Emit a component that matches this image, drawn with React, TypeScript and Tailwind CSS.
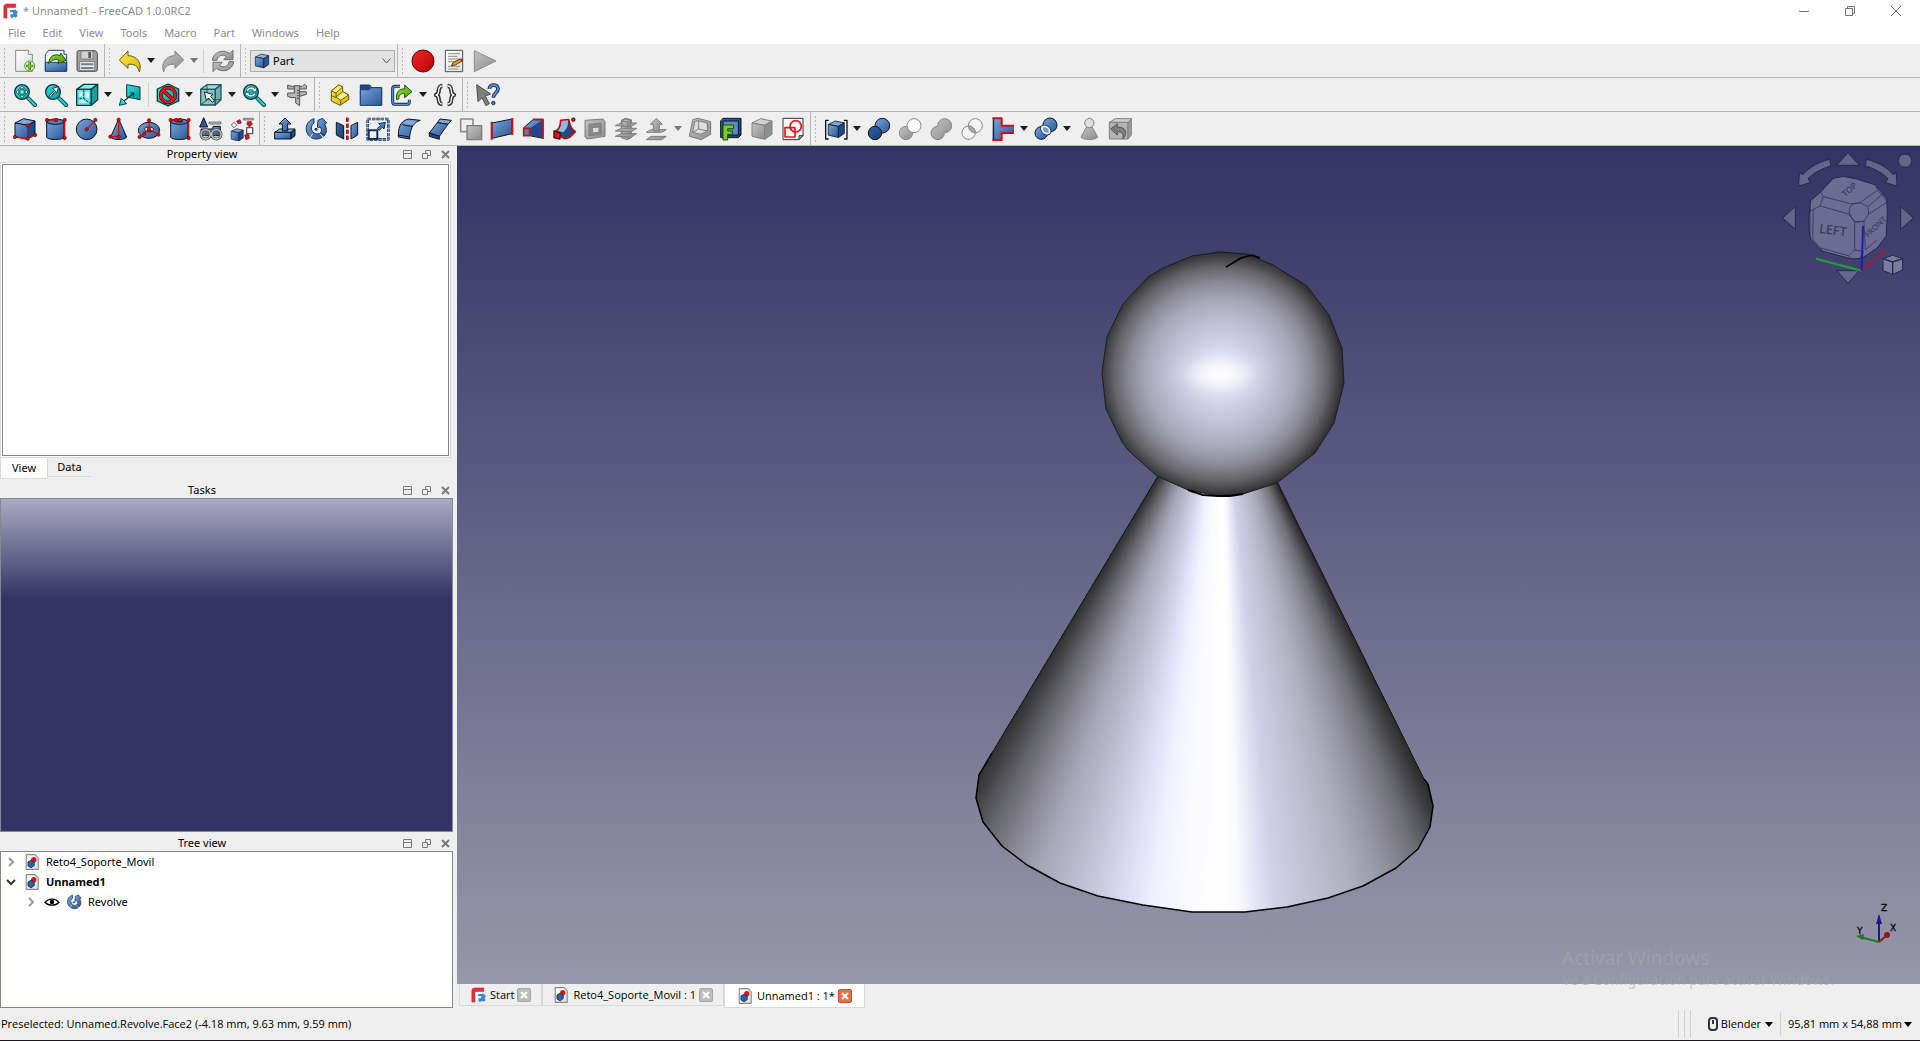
import React from "react";

const INK = "#0b1521";
const SLATE = "#555753";
const TEAL_INK = "#0a3a3c";

type Pic = React.ReactNode;

function Icon({ children, className = "size-6" }: { children: Pic; className?: string }) {
  return (
    <svg viewBox="0 0 72 72" className={`${className} shrink-0`} fill="none" strokeLinejoin="round" aria-hidden="true">
      {children}
    </svg>
  );
}

/* Shared gradients for the icon artwork */
function Gradients() {
  const defs: [string, string, string][] = [
    ["blue", "#7aa6d8", "#2a5596"],
    ["deep", "#3465a4", "#163c74"],
    ["teal", "#34e0e2", "#06989a"],
    ["gray", "#c4c4c4", "#8c8c8c"],
    ["yellow", "#fce94f", "#d9b50a"],
    ["red", "#ef2929", "#b80000"],
    ["green", "#8ae234", "#4e9a06"],
    ["paper", "#ffffff", "#dcdedb"],
  ];
  return (
    <svg className="absolute size-0" aria-hidden="true">
      <defs>
        {defs.map(([id, a, b]) => (
          <linearGradient key={id} id={id} x1="0" y1="0" x2="1" y2="1">
            <stop offset="0" stopColor={a} />
            <stop offset="1" stopColor={b} />
          </linearGradient>
        ))}
      </defs>
    </svg>
  );
}

function Dots({ at }: { at: [number, number][] }) {
  return (
    <>
      {at.map(([x, y]) => (
        <circle key={`${x}-${y}`} cx={x} cy={y} r="5" fill="#e01010" stroke="#6d0000" strokeWidth="2" />
      ))}
    </>
  );
}

function Cube({ top, front, side, ink = INK }: { top: string; front: string; side: string; ink?: string }) {
  return (
    <g stroke={ink} strokeWidth="3">
      <path d="M6 18 32 5 66 12 44 25Z" fill={top} />
      <path d="M6 18 44 25V67L6 58Z" fill={front} />
      <path d="M44 25 66 12V52L44 67Z" fill={side} />
    </g>
  );
}

const lens = (
  <>
    <path d="M46 46 66 66" stroke={TEAL_INK} strokeWidth="12" strokeLinecap="round" />
    <path d="M46 46 66 66" stroke="#22cdd0" strokeWidth="7" strokeLinecap="round" />
    <circle cx="27" cy="27" r="22" fill="url(#teal)" stroke={TEAL_INK} strokeWidth="4" />
  </>
);

const pic: Record<string, Pic> = {
  new: (
    <>
      <path d="M8 4H46L58 16V67H8Z" fill="url(#paper)" stroke="#888a85" strokeWidth="3" />
      <path d="M46 4V16H58" fill="#fff" stroke="#888a85" strokeWidth="3" />
      <circle cx="50" cy="51" r="15" fill="#eef8e4" stroke="#5c8f2e" strokeWidth="3" />
      <path d="M50 40V62M39 51H61" stroke="#39700a" strokeWidth="8" />
      <path d="M50 42V60M41 51H59" stroke="#73d216" strokeWidth="4" />
    </>
  ),
  open: (
    <>
      <path d="M4 16V66H68V16H60V4H14L6 14Z" fill="#eef0f2" stroke="#23497f" strokeWidth="3" />
      <path d="M4 40H68V67H4Z" fill="url(#blue)" stroke="#1d3f73" strokeWidth="3" />
      <path d="M14 44C16 18 34 14 48 20L50 12 66 34 42 44 45 34C34 28 26 32 14 44Z" fill="url(#green)" stroke="#244f04" strokeWidth="3" />
    </>
  ),
  save: (
    <>
      <path d="M6 10Q6 5 11 5H61L67 12V62Q67 67 62 67H11Q6 67 6 62Z" fill="#a0a19d" stroke="#4d4f4b" strokeWidth="3" />
      <path d="M18 6H54V30H18Z" fill="#d3d4d1" stroke="#666" strokeWidth="2" />
      <path d="M40 9H48V27H40Z" fill="#55575a" />
      <path d="M14 38H59V64H14Z" fill="#eee" stroke="#666" strokeWidth="2" />
      <path d="M18 43H55V49H18ZM18 54H55V60H18Z" fill="#6f7f97" />
    </>
  ),
  undo: <path d="M4 33 30 6V20C56 20 74 42 64 69C60 50 48 44 30 46V58Z" fill="url(#yellow)" stroke="#6b5a04" strokeWidth="3" />,
  redo: <path d="M68 33 42 6V20C16 20-2 42 8 69C12 50 24 44 42 46V58Z" fill="url(#gray)" stroke="#848484" strokeWidth="3" />,
  refresh: (
    <g fill="url(#gray)" stroke="#6e6e6e" strokeWidth="3">
      <path d="M4 34C6 10 36-2 56 14L66 4V32H38L47 23C34 14 20 20 18 34Z" />
      <path d="M68 38C66 62 36 74 16 58L6 68V40H34L25 49C38 58 52 52 54 38Z" />
    </g>
  ),
  part: <Cube top="#8db6e2" front="url(#blue)" side="#2a5591" />,
  record: <circle cx="36" cy="36" r="33" fill="url(#red)" stroke="#640000" strokeWidth="3" />,
  macro: (
    <>
      <path d="M10 4H62V68H10Z" fill="url(#paper)" stroke="#4e504c" strokeWidth="3" />
      <path d="M18 14H54M18 22H46M18 30H54M18 38H38M18 52H54M18 60H48" stroke="#8c8e89" strokeWidth="3" />
      <path d="M28 50 34 40 56 30 60 36 40 48Z" fill="#e0a020" stroke="#5c3a00" strokeWidth="3" />
      <path d="M54 31 58 28 63 34 60 37Z" fill="#d01010" />
    </>
  ),
  play: <path d="M4 5 69 36 4 68Z" fill="url(#gray)" stroke="#8d8d8d" strokeWidth="3" />,
  fitAll: (
    <>
      {lens}
      <path d="M27 9 34 17H20ZM27 45 34 37H20ZM9 27 17 20V34ZM45 27 37 20V34Z" fill="#fff" stroke={TEAL_INK} strokeWidth="2" />
      <path d="M21 21H33V33H21Z" fill="#8ff0f0" stroke={TEAL_INK} strokeWidth="2" />
    </>
  ),
  fitSel: (
    <>
      {lens}
      <path d="M14 40 32 22 26 16 44 11 39 29 34 25 19 43Z" fill="#fff" stroke={TEAL_INK} strokeWidth="3" />
    </>
  ),
  iso: (
    <>
      <g stroke={TEAL_INK} strokeWidth="4">
        <path d="M5 19 26 4H68L49 19Z" fill="#7df2f2" />
        <path d="M5 19H49V67H5Z" fill="#5fe6e8" />
        <path d="M49 19 68 4V50L49 67Z" fill="#0ea5a8" />
      </g>
      <path d="M26 22V46H9M26 46 46 62" stroke={TEAL_INK} strokeWidth="3" strokeDasharray="6 4" />
      <path d="M13 27H22V41H13ZM31 27H42V47L31 43ZM14 60V52H26L36 60Z" fill="#d9fbfb" />
    </>
  ),
  axes: (
    <>
      <path d="M26 5 66 12V50L26 42Z" fill="url(#teal)" stroke={TEAL_INK} strokeWidth="3" />
      <path d="M48 30 18 54" stroke={TEAL_INK} strokeWidth="4" />
      <path d="M36 30 48 30 46 42" stroke={TEAL_INK} strokeWidth="3" />
      <path d="M4 67 10 46 26 62Z" fill="#2fd6d8" stroke={TEAL_INK} strokeWidth="3" />
    </>
  ),
  drawStyle: (
    <>
      <path d="M36 3 68 18V54L36 69 4 54V18Z" fill="url(#teal)" stroke={TEAL_INK} strokeWidth="4" />
      <circle cx="36" cy="36" r="22" stroke="#4a0000" strokeWidth="11" />
      <path d="M21 22 51 50" stroke="#4a0000" strokeWidth="11" />
      <circle cx="36" cy="36" r="22" stroke="#e01818" strokeWidth="7" />
      <path d="M21 22 51 50" stroke="#e01818" strokeWidth="7" />
    </>
  ),
  selView: (
    <>
      <g stroke="#1d5a5c" strokeWidth="4">
        <path d="M5 19 24 5H66L49 19Z" fill="#a8d8d8" />
        <path d="M5 19H49V66H5Z" fill="#8cc2c2" />
        <path d="M49 19 66 5V50L49 66Z" fill="#6fb0b1" />
        <path d="M24 6V50L6 65M24 50H66" strokeWidth="3" />
      </g>
      <path d="M16 27 42 34 34 40 46 53 40 58 29 45 22 52Z" fill="#fff" stroke="#123" strokeWidth="3" />
    </>
  ),
  syncView: (
    <>
      {lens}
      <path d="M12 25C14 12 32 8 39 17L43 13V26H30L34 22C28 17 20 19 18 25ZM42 30C40 42 22 46 15 37L11 41V29H24L20 33C26 38 34 36 36 30Z" fill="#fff" stroke={TEAL_INK} strokeWidth="2" />
    </>
  ),
  caliper: (
    <g fill="#b5b6b2" stroke={SLATE} strokeWidth="3">
      <path d="M8 6 20 10H52L58 4 64 8V18H8Z" />
      <path d="M28 8H44V68L32 60V44H18L8 40V30H28Z" />
      <path d="M44 26H64V34L44 40Z" />
      <path d="M36 22H42M36 30H42M36 38H42M36 46H42" />
    </g>
  ),
  blocks: (
    <g stroke="#6b5a04" strokeWidth="3">
      <path d="M10 24 32 6 44 12V26L62 36V50L36 67 10 54Z" fill="url(#yellow)" />
      <path d="M10 24 32 6 44 12 24 30ZM24 42 44 26 62 36 38 52Z" fill="#fff27a" />
      <path d="M24 30V42M38 52V66M10 38 24 44" />
    </g>
  ),
  folder: (
    <>
      <path d="M4 6H32L38 14H68V66H4Z" fill="#234a85" stroke="#15305c" strokeWidth="3" />
      <path d="M4 20H30L36 14H68V67H4Z" fill="url(#blue)" stroke="#1d3f73" strokeWidth="3" />
    </>
  ),
  share: (
    <>
      <path d="M30 10H16Q8 10 8 18V56Q8 64 16 64H50Q58 64 58 56V50" stroke="#10294d" strokeWidth="9" />
      <path d="M30 10H16Q8 10 8 18V56Q8 64 16 64H50Q58 64 58 56V50" stroke="#5b8cc8" strokeWidth="4" />
      <path d="M20 50C16 26 30 16 44 18V6L66 26 44 44V32C34 30 26 36 26 48Z" fill="url(#green)" stroke="#244f04" strokeWidth="3" />
    </>
  ),
  braces: (
    <>
      <path d="M28 9C10 9 24 34 9 36C24 38 10 63 28 63M44 9C62 9 48 34 63 36C48 38 62 63 44 63" stroke="#2e3436" strokeWidth="13" />
      <path d="M27 9C10 9 24 34 9 36C24 38 10 63 27 63M45 9C62 9 48 34 63 36C48 38 62 63 45 63" stroke="#fafafa" strokeWidth="4" />
    </>
  ),
  whats: (
    <>
      <path d="M2 5 44 33 28 39 40 62 30 68 18 44 6 56Z" fill="#7e807c" stroke="#4a4c49" strokeWidth="3" />
      <path d="M40 18C40 2 66 2 66 18C66 30 52 28 52 44" stroke="#10294d" strokeWidth="11" />
      <path d="M40 18C40 2 66 2 66 18C66 30 52 28 52 44" stroke="#5b8cc8" strokeWidth="6" />
      <circle cx="52" cy="60" r="5" fill="#5b8cc8" stroke="#10294d" strokeWidth="3" />
    </>
  ),
  box: (
    <>
      <Cube top="#7ba9da" front="url(#blue)" side="#204a87" />
      <path d="M6 60 44 66 66 53M44 66V26" stroke="#d01010" strokeWidth="4" />
      <Dots at={[[6, 60], [44, 65], [66, 54], [44, 25]]} />
    </>
  ),
  cylinder: (
    <>
      <path d="M8 14V60C8 70 60 70 60 60V14Z" fill="url(#blue)" stroke={INK} strokeWidth="3" />
      <ellipse cx="34" cy="14" rx="26" ry="8" fill="#4c7fbe" stroke={INK} strokeWidth="3" />
      <path d="M9 9H34M62 9V62" stroke="#d01010" strokeWidth="4" />
      <Dots at={[[9, 9], [36, 9], [62, 9], [62, 63]]} />
    </>
  ),
  sphere: (
    <>
      <circle cx="35" cy="37" r="31" fill="url(#blue)" stroke={INK} strokeWidth="3" />
      <path d="M35 37 60 10" stroke="#d01010" strokeWidth="4" />
      <Dots at={[[35, 37], [61, 9]]} />
    </>
  ),
  cone: (
    <>
      <path d="M38 6 62 60C58 70 18 70 14 60Z" fill="url(#blue)" stroke={INK} strokeWidth="3" />
      <path d="M38 8V59H14" stroke="#d01010" strokeWidth="4" />
      <Dots at={[[38, 8], [38, 59], [13, 59]]} />
    </>
  ),
  torus: (
    <>
      <ellipse cx="36" cy="40" rx="32" ry="24" fill="url(#blue)" stroke={INK} strokeWidth="3" />
      <ellipse cx="36" cy="37" rx="13" ry="7" fill="#e8eef6" stroke={INK} strokeWidth="3" />
      <path d="M36 10V37L8 60M36 37 64 53" stroke="#d01010" strokeWidth="4" />
      <Dots at={[[36, 10], [36, 37], [8, 60], [22, 50], [64, 53]]} />
    </>
  ),
  tube: (
    <>
      <path d="M8 14V60C8 70 60 70 60 60V14Z" fill="url(#blue)" stroke={INK} strokeWidth="3" />
      <ellipse cx="34" cy="14" rx="26" ry="8" fill="#4c7fbe" stroke={INK} strokeWidth="3" />
      <ellipse cx="34" cy="13" rx="12" ry="4" fill="#122c54" />
      <path d="M8 9H40M62 9V62" stroke="#d01010" strokeWidth="4" />
      <Dots at={[[8, 9], [24, 9], [36, 9], [62, 9], [62, 63]]} />
    </>
  ),
  primitives: (
    <>
      <path d="M14 2 26 30H2Z" fill="#2c5a9a" stroke={INK} strokeWidth="3" />
      <path d="M30 15H66V21H30Z" fill="#b5b6b2" stroke={SLATE} strokeWidth="2" />
      <path d="M6 36H38L44 28H64V56H6Z" fill="url(#blue)" stroke={INK} strokeWidth="3" />
      <g stroke={SLATE} strokeWidth="9">
        <circle cx="20" cy="52" r="14" />
        <circle cx="52" cy="52" r="14" />
      </g>
      <g stroke="#c9cac6" strokeWidth="4">
        <circle cx="20" cy="52" r="14" />
        <circle cx="52" cy="52" r="14" />
      </g>
      <path d="M16 56 24 46M48 56 56 46" stroke={SLATE} strokeWidth="4" />
    </>
  ),
  builder: (
    <>
      <g transform="translate(0 32) scale(.6)">
        <Cube top="#7ba9da" front="url(#blue)" side="#204a87" />
      </g>
      <path d="M12 16 20 24 12 32 4 24Z" fill="#fff" stroke={SLATE} strokeWidth="3" />
      <path d="M40 4H70V9H40Z" fill="#b5b6b2" stroke={SLATE} strokeWidth="2" />
      <path d="M50 32H68V50H50Z" fill="#fff" stroke={SLATE} strokeWidth="4" />
      <path d="M20 12 30 8 34 18 24 20ZM52 14H64V20H68L58 30 50 20H54ZM44 54 56 52 58 64 48 68Z" fill="#e01818" stroke="#6d0000" strokeWidth="2" />
    </>
  ),
  extrude: (
    <>
      <path d="M5 46 20 36H66L54 46Z" fill="#8db6e2" stroke={INK} strokeWidth="3" />
      <path d="M5 46H54V66H5Z" fill="url(#blue)" stroke={INK} strokeWidth="3" />
      <path d="M54 46 66 36V56L54 66Z" fill="#204a87" stroke={INK} strokeWidth="3" />
      <path d="M36 3 54 21H44V42H28V21H18Z" fill="url(#blue)" stroke={INK} strokeWidth="3" />
    </>
  ),
  revolve: (
    <>
      <path d="M30 5A31 31 0 1 0 62 54L50 48A18 18 0 1 1 30 18Z" fill="url(#blue)" stroke="#17345f" strokeWidth="3" />
      <path d="M18 62 26 50M58 62 48 50" stroke="#efefef" strokeWidth="3" />
      <path d="M42 10 56 4 68 18 62 22C70 36 68 48 62 54L50 48C54 40 52 34 48 30L40 34Z" fill="url(#blue)" stroke="#17345f" strokeWidth="3" />
      <circle cx="36" cy="37" r="6" fill="#17345f" stroke="#efefef" strokeWidth="3" />
    </>
  ),
  mirror: (
    <>
      <path d="M4 16 26 26V66L4 54Z" fill="url(#deep)" stroke={INK} strokeWidth="3" />
      <path d="M68 16 48 26V66L68 54Z" fill="url(#blue)" stroke={INK} strokeWidth="3" />
      <path d="M37 2V70" stroke="#6d0000" strokeWidth="8" strokeDasharray="12 6" />
      <path d="M37 2V70" stroke="#e01818" strokeWidth="5" strokeDasharray="12 6" />
    </>
  ),
  scale: (
    <>
      <path d="M5 6H67V67H5Z" stroke="#12305c" strokeWidth="8" strokeDasharray="10 3" />
      <path d="M5 6H67V67H5Z" stroke="#5b8cc8" strokeWidth="4" strokeDasharray="10 3" />
      <path d="M8 40H34V66H8Z" fill="#f2f2f2" stroke="#12305c" strokeWidth="6" />
      <path d="M34 34 44 26 38 20 58 16 54 36 49 31 40 40Z" fill="url(#blue)" stroke="#12305c" strokeWidth="3" />
    </>
  ),
  fillet: (
    <>
      <path d="M4 54C4 24 16 10 34 6L70 10C50 16 42 30 38 58V66L4 60Z" fill="url(#blue)" stroke={INK} strokeWidth="3" />
      <path d="M4 54 38 60M16 22C24 26 38 28 48 28" stroke={INK} strokeWidth="3" />
      <path d="M34 9 62 12C56 14 52 18 48 24 38 24 28 22 20 19 24 14 28 11 34 9Z" fill="#7fabdc" />
    </>
  ),
  chamfer: (
    <g stroke={INK} strokeWidth="3">
      <path d="M36 6 70 10 60 22 28 17Z" fill="#7fabdc" />
      <path d="M28 17 60 22 34 58 4 48Z" fill="url(#blue)" />
      <path d="M4 48 34 58V67L4 58Z" fill="#204a87" />
    </g>
  ),
  face: (
    <>
      <path d="M5 6H42V44H5Z" fill="#efefef" stroke="#8d8d8d" strokeWidth="5" />
      <path d="M24 26H68V68H24Z" fill="url(#gray)" stroke="#7c7c7c" strokeWidth="4" />
    </>
  ),
  ruled: (
    <>
      <path d="M6 18 66 6V50L6 64Z" fill="url(#blue)" stroke={INK} strokeWidth="3" />
      <path d="M5 14V68M67 3V54" stroke="#d01010" strokeWidth="6" />
    </>
  ),
  loft: (
    <>
      <path d="M8 32 36 8H66V64L26 56 8 54Z" fill="url(#blue)" stroke={INK} strokeWidth="3" />
      <path d="M26 34 64 10V62L26 54Z" fill="#204a87" />
      <path d="M36 7H66V66" stroke="#d01010" strokeWidth="5" />
      <path d="M8 34H26V56H8Z" fill="#4c7fbe" stroke="#d01010" strokeWidth="5" />
    </>
  ),
  sweep: (
    <>
      <path d="M26 10 50 8C54 30 60 38 70 44L54 60C44 66 30 66 24 56L8 44C20 40 26 28 26 10Z" fill="#204a87" stroke="#c00" strokeWidth="5" />
      <path d="M28 12 48 10C50 24 44 36 34 46L16 42C24 36 28 26 28 12Z" fill="#8db6e2" />
      <path d="M6 42 24 48V66L6 62Z" fill="#e01818" stroke="#4a0000" strokeWidth="4" />
      <circle cx="64" cy="8" r="5" fill="#e01818" stroke="#4a0000" strokeWidth="3" />
    </>
  ),
  section: (
    <g stroke="#7c7c7c" strokeWidth="3">
      <path d="M6 10 60 6 66 14V58L12 66 6 60Z" fill="url(#gray)" />
      <path d="M18 22 54 19V52L18 56Z" fill="#8c8c8c" />
      <path d="M28 32 48 30V46L28 48Z" fill="#dcdcdc" />
    </g>
  ),
  crossSections: (
    <g fill="url(#gray)" stroke="#7c7c7c" strokeWidth="3">
      <path d="M22 10 34 4 52 8V62L40 68 22 62Z" />
      <path d="M4 26 22 18H68L52 28ZM4 42 22 34H68L52 44ZM4 58 22 50H68L52 60Z" />
      <path d="M24 12 34 6 50 9V24L42 30 24 26Z" />
      <path d="M24 12 42 15 50 9M42 15V28" />
    </g>
  ),
  offset: (
    <g fill="url(#gray)" stroke="#7c7c7c" strokeWidth="3">
      <path d="M4 46 18 38H64L50 46ZM4 68 18 58H64L50 68Z" />
      <path d="M34 4 52 22H43V42H25V22H16Z" />
    </g>
  ),
  thickness: (
    <g stroke="#7c7c7c" strokeWidth="3">
      <path d="M14 8 30 4 68 14V52L40 68 4 58Z" fill="url(#gray)" />
      <path d="M20 14 30 11 58 18V42L38 52 14 46Z" fill="#dedede" />
      <path d="M32 12V36L58 42M32 36 14 46" />
    </g>
  ),
  projection: (
    <>
      <path d="M5 12 12 4H66V54L58 62H5Z" fill="url(#deep)" stroke={INK} strokeWidth="3" />
      <path d="M12 12H58V54H12Z" fill="#5b8cc8" stroke={INK} strokeWidth="3" />
      <path d="M12 24H44V35H26V42H40V52H26V69H12Z" fill="#73d216" stroke="#1f4a04" strokeWidth="3" />
    </>
  ),
  grayCube: <Cube top="#d2d2d2" front="url(#gray)" side="#909090" ink="#808080" />,
  sketch: (
    <>
      <path d="M6 4H66V56L54 68H6Z" fill="#fdfdfd" stroke="#2e3436" strokeWidth="3" />
      <path d="M66 56H54V68Z" fill="#b8b9b5" stroke="#2e3436" strokeWidth="3" />
      <circle cx="44" cy="28" r="17" stroke="#e01818" strokeWidth="5" />
      <path d="M12 32H42V60H12Z" stroke="#e01818" strokeWidth="5" />
    </>
  ),
  compound: (
    <>
      <path d="M14 10H5V66H14M60 10H69V66H60" stroke={INK} strokeWidth="4" />
      <g transform="translate(8 8) scale(.8)">
        <Cube top="#7ba9da" front="url(#blue)" side="#204a87" />
      </g>
    </>
  ),
  boolean: (
    <g stroke={INK} strokeWidth="3">
      <circle cx="46" cy="26" r="22" fill="url(#blue)" />
      <circle cx="24" cy="48" r="20" fill="url(#deep)" />
    </g>
  ),
  cut: (
    <g stroke="#8a8a8a" strokeWidth="3">
      <circle cx="24" cy="48" r="20" fill="url(#gray)" />
      <circle cx="48" cy="26" r="21" fill="#fdfdfd" />
    </g>
  ),
  fuse: <path d="M26 28A21 21 0 1 1 46 47A20 20 0 1 1 26 28Z" fill="url(#gray)" stroke="#858585" strokeWidth="3" />,
  common: (
    <g stroke="#8a8a8a" strokeWidth="3">
      <circle cx="46" cy="26" r="21" fill="#f8f8f8" />
      <circle cx="26" cy="47" r="20" fill="#f8f8f8" fillOpacity=".7" />
      <path d="M26 27C36 26 46 36 46 47C34 48 25 38 26 27Z" fill="#a6a6a6" />
    </g>
  ),
  join: (
    <>
      <path d="M4 4H32V26H69V48H32V69H4Z" fill="url(#blue)" />
      <path d="M4 4H32V26H69M69 48H32V69H4" stroke="#d01010" strokeWidth="6" />
      <path d="M8 7V66" stroke={INK} strokeWidth="3" />
    </>
  ),
  split: (
    <g stroke={INK} strokeWidth="3">
      <circle cx="48" cy="24" r="21" fill="url(#blue)" />
      <circle cx="22" cy="48" r="19" fill="url(#blue)" />
      <path d="M24 30C38 24 50 36 46 48C34 54 22 44 24 30Z" fill="#6c9bd2" stroke="#12305c" strokeWidth="10" />
      <path d="M24 30C38 24 50 36 46 48C34 54 22 44 24 30Z" fill="#6c9bd2" stroke="#f4f4f4" strokeWidth="5" />
    </g>
  ),
  check: (
    <g stroke="#848484" strokeWidth="3">
      <path d="M30 28 12 60C16 70 58 70 62 60L44 28Z" fill="url(#gray)" />
      <circle cx="37" cy="18" r="14" fill="#dedede" />
    </g>
  ),
  defeature: (
    <>
      <path d="M4 16 22 5H70L60 16Z" fill="#cfcfcf" stroke="#808080" strokeWidth="3" />
      <path d="M4 16H60V66H4Z" fill="#b4b4b4" stroke="#808080" strokeWidth="3" />
      <path d="M60 16 70 5V54L60 66Z" fill="#9a9a9a" stroke="#808080" strokeWidth="3" />
      <path d="M8 36 28 20V30C56 30 60 50 44 66C48 50 42 44 28 44V54Z" fill="#7c7c7c" stroke="#585858" strokeWidth="3" />
    </>
  ),
  eye: (
    <>
      <path d="M5 38C20 18 52 18 67 38C52 54 20 54 5 38Z" fill="#fff" stroke="#000" strokeWidth="6" />
      <circle cx="36" cy="36" r="10" fill="#000" />
    </>
  ),
  doc: (
    <>
      <path d="M10 3H50L64 17V69H10Z" fill="url(#paper)" stroke="#888a85" strokeWidth="5" />
      <circle cx="44" cy="26" r="12" fill="#d81818" />
      <path d="M18 36 32 28 46 36V52L32 62 18 54Z" fill="#2f62a5" stroke="#142d54" strokeWidth="4" />
    </>
  ),
  logo: (
    <>
      <path d="M8 68V18Q8 4 22 4H62V20H24V68Z" fill="#e0303c" stroke="#b01824" strokeWidth="2" />
      <path d="M36 28H58L64 34 70 36V44L66 50 70 58 62 66 54 62 44 70 38 62Z" fill="#3d86dc" />
      <path d="M24 22H56V32H35V42H50V51H35V69H24Z" fill="#fff" />
    </>
  ),
};

type Tool = { label: string; icon?: string; menu?: boolean; off?: boolean };
const t = (icon: string, label: string, menu = false, off = false): Tool => ({ icon, label, menu, off });
const gap: Tool = { label: "|" };

const fileTools = [t("new", "New"), t("open", "Open"), t("save", "Save")];
const editTools = [t("undo", "Undo", true), t("redo", "Redo", true, true), gap, t("refresh", "Refresh")];
const macroTools = [t("record", "Record macro"), t("macro", "Macros"), t("play", "Execute macro")];
const viewTools = [
  t("fitAll", "Fit all"), t("fitSel", "Fit selection"), t("iso", "Isometric", true), t("axes", "Align to selection"), gap,
  t("drawStyle", "Draw style", true), t("selView", "Selection view", true), t("syncView", "Sync view", true), t("caliper", "Measure"),
];
const structureTools = [t("blocks", "Create part"), t("folder", "Create group"), t("share", "Link", true), t("braces", "Variable set")];
const helpTools = [t("whats", "What's this?")];
const solidTools = [
  t("box", "Cube"), t("cylinder", "Cylinder"), t("sphere", "Sphere"), t("cone", "Cone"), t("torus", "Torus"),
  t("tube", "Tube"), t("primitives", "Primitives"), t("builder", "Shape builder"),
];
const partTools = [
  t("extrude", "Extrude"), t("revolve", "Revolve"), t("mirror", "Mirror"), t("scale", "Scale"), t("fillet", "Fillet"),
  t("chamfer", "Chamfer"), t("face", "Make face"), t("ruled", "Ruled surface"), t("loft", "Loft"), t("sweep", "Sweep"),
  t("section", "Section"), t("crossSections", "Cross-sections"), t("offset", "Offset", true, true), t("thickness", "Thickness"),
  t("projection", "Projection on surface"), t("grayCube", "Color per face"), t("sketch", "Sketch"),
];
const booleanTools = [
  t("compound", "Compound", true), t("boolean", "Boolean"), t("cut", "Cut"), t("fuse", "Union"), t("common", "Intersection"),
  t("join", "Join", true), t("split", "Split", true), t("check", "Check geometry"), t("defeature", "Defeaturing"),
];

function Caret({ className = "text-black" }: { className?: string }) {
  return (
    <svg viewBox="0 0 8 5" className={`h-[5px] w-2 shrink-0 ${className}`} aria-hidden="true">
      <path d="M0 0H8L4 5Z" fill="currentColor" />
    </svg>
  );
}

function Handle() {
  return (
    <div className="flex w-[9px] items-center justify-center" aria-hidden="true">
      <div className="h-[27px] w-[3px] bg-[radial-gradient(circle,#b4b4b4_1px,transparent_1px)] bg-[size:3px_4px]" />
    </div>
  );
}

function Bar({ children, last = false }: { children: Pic; last?: boolean }) {
  return (
    <div className={`flex items-stretch ${last ? "flex-1" : "border-r border-[#b4b4b4]"}`} role="toolbar">
      <Handle />
      <div className="flex items-center pr-[2px]">{children}</div>
    </div>
  );
}

function Tools({ items }: { items: Tool[] }) {
  return (
    <>
      {items.map((it) =>
        it.icon ? (
          <div key={it.label} className="flex items-center">
            <button aria-label={it.label} className="flex h-8 w-[31px] items-center justify-center">
              <Icon>{pic[it.icon]}</Icon>
            </button>
            {it.menu && (
              <button aria-label={`${it.label} options`} className="flex h-8 w-3 items-center justify-center">
                <Caret className={it.off ? "text-[#777]" : "text-[#1c1c1c]"} />
              </button>
            )}
          </div>
        ) : (
          <div key={it.label} className="mx-[3px] h-6 w-px bg-[#cfcfcf]" />
        ),
      )}
    </>
  );
}

function Row({ children }: { children: Pic }) {
  return <div className="flex h-[34px] items-stretch border-b border-[#b4b4b4]">{children}</div>;
}

function DockTitle({ title }: { title: string }) {
  return (
    <div className="flex h-4 shrink-0 items-center pl-[5px]">
      <h2 className="flex-1 text-center">{title}</h2>
      <div className="flex items-center gap-[3px] text-[#7a7a7a]">
        <button aria-label={`Collapse ${title}`} className="flex size-4 items-center justify-center">
          <svg viewBox="0 0 9 9" className="size-[9px]" fill="none" stroke="currentColor"><path d="M.5.5H8.5V8.5H.5ZM1 3.500H8" /></svg>
        </button>
        <button aria-label={`Float ${title}`} className="flex size-4 items-center justify-center">
          <svg viewBox="0 0 9 9" className="size-[9px]" fill="none" stroke="currentColor"><path d="M.5 3.500H5.500V8.500H.5ZM3.500 3V.5H8.500V5.500H6" /></svg>
        </button>
        <button aria-label={`Close ${title}`} className="flex size-4 items-center justify-center">
          <svg viewBox="0 0 9 9" className="size-[9px]" fill="none" stroke="currentColor" strokeWidth="2"><path d="M1 1 8 8M8 1 1 8" /></svg>
        </button>
      </div>
    </div>
  );
}

function Twisty({ open = false }: { open?: boolean }) {
  return (
    <button aria-label={open ? "Collapse" : "Expand"} className={`flex size-5 shrink-0 items-center justify-center ${open ? "text-[#333]" : "text-[#9a9a9a]"}`}>
      <svg viewBox="0 0 10 10" className="size-[10px]" fill="none" stroke="currentColor" strokeWidth="2">
        <path d={open ? "M1 3 5 7 9 3" : "M3 1 7 5 3 9"} />
      </svg>
    </button>
  );
}

/* Shade of the cone surface against horizontal slope (dx/dy) measured from its apex */
const shade: [number, number, number, number][] = [
  [-0.62, 42, 42, 44], [-0.57, 66, 66, 70], [-0.5, 104, 104, 111], [-0.42, 144, 142, 155], [-0.36, 168, 168, 186],
  [-0.3, 184, 184, 205], [-0.22, 208, 208, 230], [-0.18, 222, 222, 246], [-0.12, 243, 243, 255], [-0.06, 250, 250, 255],
  [0.0, 255, 255, 255], [0.03, 250, 250, 254], [0.07, 226, 226, 243], [0.1, 208, 208, 232], [0.17, 194, 194, 214],
  [0.25, 174, 174, 190], [0.32, 150, 149, 163], [0.4, 112, 112, 120], [0.46, 68, 68, 72], [0.51, 34, 34, 36],
];
const APEX = { x: 262, y: 142 };

/* Each wedge reaches to the right edge and is overlaid by the next, so no seams show */
function coneFan() {
  const parts: Pic[] = [];
  const step = 0.005;
  const far = 560;
  for (let u = -0.68; u < 0.62; u += step) {
    const m = u + step / 2;
    let i = 0;
    while (i < shade.length - 2 && shade[i + 1][0] < m) i++;
    const a = shade[i];
    const b = shade[i + 1];
    const k = Math.min(1, Math.max(0, (m - a[0]) / (b[0] - a[0])));
    const c = [1, 2, 3].map((n) => Math.round(a[n] + (b[n] - a[n]) * k));
    parts.push(
      <path
        key={u}
        d={`M${APEX.x} ${APEX.y}L${APEX.x + u * far} ${APEX.y + far}H${APEX.x + 0.7 * far}Z`}
        fill={`rgb(${c.join(",")})`}
      />,
    );
  }
  return parts;
}

const CONE = "M198 246 32 523 19 545 16 568 23 592 42 616 67 635 100 653 138 666 183 675 232 682H285L327 677 368 668 403 656 436 638 458 619 470 597 473 576 468 554 464 549 317 251Z";
const CONE_RIM = "M32 523 19 545 16 568 23 592 42 616 67 635 100 653 138 666 183 675 232 682H285L327 677 368 668 403 656 436 638 458 619 470 597 473 576 468 554 464 549";
const BALL = "M260 22 232 26 203 38 188 47 163 74 147 107 142 143 146 179 162 212 169 221 197 246 228 260 258 266 283 264 317 253 355 223 374 193 384 153 382 118 369 85 347 56 313 35 287 24Z";

function Model() {
  return (
    <svg viewBox="0 0 1463 838" className="absolute inset-0 size-full" role="img" aria-label="Revolved solid">
      <defs>
        <clipPath id="cone-clip"><path d={CONE} /></clipPath>
        <radialGradient id="ball" gradientUnits="userSpaceOnUse" cx="261" cy="144" r="123">
          <stop offset="0" stopColor="#e2e2f6" />
          <stop offset=".22" stopColor="#d4d4ec" />
          <stop offset=".42" stopColor="#bfbfd6" />
          <stop offset=".6" stopColor="#a8a8ba" />
          <stop offset=".74" stopColor="#8b8a97" />
          <stop offset=".87" stopColor="#636368" />
          <stop offset="1" stopColor="#2c2c2e" />
        </radialGradient>
        <radialGradient id="glow">
          <stop offset="0" stopColor="#fff" />
          <stop offset=".35" stopColor="#fff" stopOpacity=".65" />
          <stop offset=".7" stopColor="#fff" stopOpacity=".15" />
          <stop offset="1" stopColor="#fff" stopOpacity="0" />
        </radialGradient>
      </defs>
      <g transform="translate(503 84)" strokeLinejoin="round">
        <g clipPath="url(#cone-clip)">{coneFan()}</g>
        <path d="M198 246 32 523M464 549 317 253" stroke="#1a1a1c" fill="none" />
        <path d={CONE_RIM} stroke="#000" strokeWidth="1.500" fill="none" />
        <path d={BALL} fill="url(#ball)" stroke="#1c1c1e" />
        <ellipse cx="260" cy="144" rx="54" ry="30" fill="url(#glow)" />
        <path d="M228 260 243 265 258 266H270L283 264" stroke="#000" strokeWidth="2" fill="none" />
        <path d="M266 37 281 28 292 25 300 28" stroke="#000" strokeWidth="1.500" fill="none" />
      </g>
    </svg>
  );
}

function NavCube() {
  return (
    <svg viewBox="0 18 480 432" className="absolute top-0 right-0 h-36 w-40" role="img" aria-label="Navigation cube" fill="#65658c" stroke="#26264a" strokeWidth="3" strokeLinejoin="round">
      <path d="M264 38 298 76H230ZM264 430 298 392H230ZM68 234 106 199V268ZM460 234 422 199V268Z" />
      <path d="M209 58 213 78C184 86 160 100 144 116L152 128 116 138 118 98 128 104C148 82 176 66 209 58Z" />
      <path d="M319 58 316 78C345 86 368 100 384 116L376 128 411 138 409 98 400 104C382 82 352 66 319 58Z" />
      <circle cx="435" cy="62" r="20" />
      <path d="M220 115 250 109 290 117 347 135 380 175 382 215 379 288 350 325 305 355 275 357 185 333 152 297 147 270V225L152 182 182 156Z" fill="#6c6c92" />
      <g fill="none" strokeWidth="2">
        <path d="M182 156 190 170 276 192 300 188 353 150 347 135M353 150 380 182" />
        <path d="M190 170 180 198 160 208 148 215M180 198 266 222 284 245M160 208 158 298 182 324 265 347 284 330V247L312 244" />
        <path d="M276 192 268 206V222L284 245 312 244 326 222 324 200 300 188ZM324 200 370 160M326 222 382 186M312 244 316 330 350 300M284 330 310 334 300 355M265 347 275 357M150 200V285M182 324 186 333" />
      </g>
      <g fill="#3a3a5c" stroke="none" fontFamily="'Noto Sans', sans-serif" fontWeight="500">
        <text x="176" y="278" fontSize="38" transform="rotate(8 176 278)">LEFT</text>
        <text x="324" y="294" fontSize="24" transform="rotate(-44 324 294)">FRONT</text>
        <text x="256" y="172" fontSize="26" transform="rotate(-42 256 172)">TOP</text>
      </g>
      <g fill="none">
        <path d="M304 392 168 356" stroke="#1fa036" strokeWidth="6" />
        <path d="M304 392 376 331" stroke="#b01830" strokeWidth="5" />
        <path d="M305 392 309 258" stroke="#1a1ac0" strokeWidth="6" />
      </g>
      <path d="M369 356 398 346 428 356V390L398 403 369 392Z" fill="#7c7c9e" strokeWidth="3" />
      <path d="M369 356 398 366 428 356M398 366V403" fill="none" strokeWidth="4" />
    </svg>
  );
}

function AxisCross() {
  return (
    <svg viewBox="0 0 48 48" className="absolute right-4 bottom-9 size-12" role="img" aria-label="Axis cross" fill="none" fontFamily="'DejaVu Sans', sans-serif" fontSize="9">
      <path d="M23 42V16" stroke="#1a1a8c" strokeWidth="2" />
      <path d="M23 14 20 24H26Z" fill="#1a1a8c" />
      <path d="M23 42 4 37" stroke="#1c7a24" strokeWidth="2" />
      <path d="M0 36 8 34 7 40Z" fill="#1c7a24" />
      <path d="M23 42 31 35" stroke="#8c1a20" strokeWidth="2" />
      <circle cx="31" cy="35" r="3" fill="#8c1a20" />
      <g fill="#000" stroke="#000" strokeWidth=".3">
        <text x="25" y="11">Z</text>
        <text x="1" y="34">Y</text>
        <text x="34" y="31">X</text>
      </g>
    </svg>
  );
}

function DocTab({ icon, label, active = false, pad }: { icon: string; label: string; active?: boolean; pad: string }) {
  return (
    <div className={`flex items-center border-x border-b border-[#d9d9d9] ${pad} ${active ? "h-6 bg-white" : "h-[22px]"}`} role="tab" aria-selected={active}>
      <Icon className="mr-1 size-4">{pic[icon]}</Icon>
      <span>{label}</span>
      <button aria-label={`Close ${label}`} className={`ml-[3px] flex size-[14px] items-center justify-center rounded-[2px] border ${active ? "border-[#d8492c] bg-[#e0744e]" : "border-[#a6a6a6] bg-[#bcbcbc]"}`}>
        <svg viewBox="0 0 8 8" className="size-2" stroke="#fff" strokeWidth="2"><path d="M1 1 7 7M7 1 1 7" /></svg>
      </button>
    </div>
  );
}

export default function App() {
  return (
    <div className="relative flex h-screen flex-col overflow-hidden bg-[#efefef] font-['Noto_Sans',sans-serif] text-[11px] leading-4 text-black">
      <Gradients />

      <header className="bg-white text-[#8c8c8c]">
        <div className="flex h-[22px] items-center pr-px">
          <Icon className="mx-[2px] size-4">{pic.logo}</Icon>
          <h1 className="ml-[3px] flex-1">* Unnamed1 - FreeCAD 1.0.0RC2</h1>
          <button aria-label="Minimize" className="flex h-[22px] w-[46px] items-center justify-center">
            <svg viewBox="0 0 10 10" className="size-[10px]" stroke="#777"><path d="M0 5.500H10" /></svg>
          </button>
          <button aria-label="Restore" className="flex h-[22px] w-[46px] items-center justify-center">
            <svg viewBox="0 0 10 10" className="size-[10px]" fill="none" stroke="#777"><path d="M.5 2.500H7.500V9.500H.5ZM2.500 2V.5H9.500V7.500H8" /></svg>
          </button>
          <button aria-label="Close" className="flex h-[22px] w-[46px] items-center justify-center">
            <svg viewBox="0 0 10 10" className="size-[10px]" stroke="#777"><path d="M0 0 10 10M10 0 0 10" /></svg>
          </button>
        </div>
        <nav className="flex h-[22px] items-center gap-px" aria-label="Main menu">
          {["File", "Edit", "View", "Tools", "Macro", "Part", "Windows", "Help"].map((m) => (
            <button key={m} className="px-2">{m}</button>
          ))}
        </nav>
      </header>

      <Row>
        <Bar><Tools items={fileTools} /></Bar>
        <Bar><Tools items={editTools} /></Bar>
        <Bar>
          <div className="relative flex items-center">
            <select aria-label="Workbench" className="h-[22px] w-[145px] appearance-none border border-[#adadad] bg-[#e2e2e2] pl-[22px] text-[11px] leading-4">
              <option>Part</option>
            </select>
            <span className="pointer-events-none absolute left-1 flex"><Icon className="size-4">{pic.part}</Icon></span>
            <svg viewBox="0 0 9 6" className="pointer-events-none absolute right-1 h-[6px] w-[9px]" fill="none" stroke="#555"><path d="M.5.5 4.500 5 8.500.5" /></svg>
          </div>
        </Bar>
        <Bar last><Tools items={macroTools} /></Bar>
      </Row>
      <Row>
        <Bar><Tools items={viewTools} /></Bar>
        <Bar><Tools items={structureTools} /></Bar>
        <Bar last><Tools items={helpTools} /></Bar>
      </Row>
      <Row>
        <Bar><Tools items={solidTools} /></Bar>
        <Bar><Tools items={partTools} /></Bar>
        <Bar last><Tools items={booleanTools} /></Bar>
      </Row>

      <div className="flex min-h-0 flex-1">
        <aside className="flex w-[457px] shrink-0 flex-col pr-1">
          <section className="flex flex-[336] flex-col">
            <DockTitle title="Property view" />
            <div className="mr-[2px] flex flex-1 border border-[#d9d9d9] bg-white p-px">
              <div className="flex-1 border border-[#828790] bg-white" />
            </div>
            <div className="flex h-6 items-start" role="tablist">
              <button role="tab" aria-selected="true" className="h-[21px] w-12 border-x border-b border-[#d9d9d9] bg-white">View</button>
              <button role="tab" aria-selected="false" className="h-[19px] w-[43px] border-b border-[#d9d9d9]">Data</button>
            </div>
          </section>
          <section className="flex flex-[350] flex-col">
            <DockTitle title="Tasks" />
            <div className="flex-1 border border-[#828790] bg-[linear-gradient(#aaaac2,#333365_30%)]" />
          </section>
          <section className="flex flex-[176] flex-col">
            <div className="h-[3px]" />
            <DockTitle title="Tree view" />
            <ul className="flex-1 border border-[#828790] bg-white" role="tree">
              <li className="flex h-5 items-center" role="treeitem">
                <Twisty />
                <Icon className="mr-[6px] ml-[3px] size-4">{pic.doc}</Icon>Reto4_Soporte_Movil
              </li>
              <li className="flex h-5 items-center font-bold" role="treeitem">
                <Twisty open />
                <Icon className="mr-[6px] ml-[3px] size-4">{pic.doc}</Icon>Unnamed1
              </li>
              <li className="flex h-5 items-center pl-5" role="treeitem">
                <Twisty />
                <Icon className="mr-[6px] ml-[3px] size-4">{pic.eye}</Icon>
                <Icon className="mr-[6px] size-4">{pic.revolve}</Icon>Revolve
              </li>
            </ul>
          </section>
        </aside>

        <main className="flex min-w-0 flex-1 flex-col">
          <div className="relative flex-1 bg-[linear-gradient(#333365,#9797aa)]">
            <Model />
            <NavCube />
            <AxisCross />
          </div>
          <div className="flex h-6 items-start pl-[2px] font-['Open_Sans',sans-serif]" role="tablist">
            <DocTab icon="logo" label="Start" pad="px-[10px]" />
            <DocTab icon="doc" label="Reto4_Soporte_Movil : 1" pad="px-[10px]" />
            <DocTab icon="doc" label="Unnamed1 : 1*" active pad="px-3" />
          </div>
        </main>
      </div>

      <footer className="flex h-[33px] items-center border-b border-[#1c1520] pl-px font-['Open_Sans',sans-serif]">
        <p className="flex-1">Preselected: Unnamed.Revolve.Face2 (-4.18 mm, 9.63 mm, 9.59 mm)</p>
        <div className="mr-4 flex gap-[5px]" aria-hidden="true">
          <div className="h-7 w-px bg-[#d0d0d0]" />
          <div className="h-7 w-px bg-[#d0d0d0]" />
          <div className="h-7 w-px bg-[#d0d0d0]" />
        </div>
        <button className="flex items-center">
          <svg viewBox="0 0 12 16" className="mr-[2px] h-4 w-3" fill="none" stroke="#2e3436" strokeWidth="2"><rect x="2" y="2" width="8" height="12" rx="3" /><path d="M6 4V8" /></svg>
          Blender
          <Caret className="ml-1 text-black" />
        </button>
        <div className="mx-[7px] h-6 w-px bg-[#d0d0d0]" />
        <button className="mr-2 flex items-center">
          95,81 mm x 54,88 mm
          <Caret className="ml-[2px] text-black" />
        </button>
      </footer>

      <div className="pointer-events-none absolute right-20 bottom-[51px] w-[278px] whitespace-nowrap text-[#a8a8a8]/60">
        <p className="text-[19px] leading-6">Activar Windows</p>
        <p className="text-[14px] leading-5">Ve a Configuración para activar Windows.</p>
      </div>
    </div>
  );
}
